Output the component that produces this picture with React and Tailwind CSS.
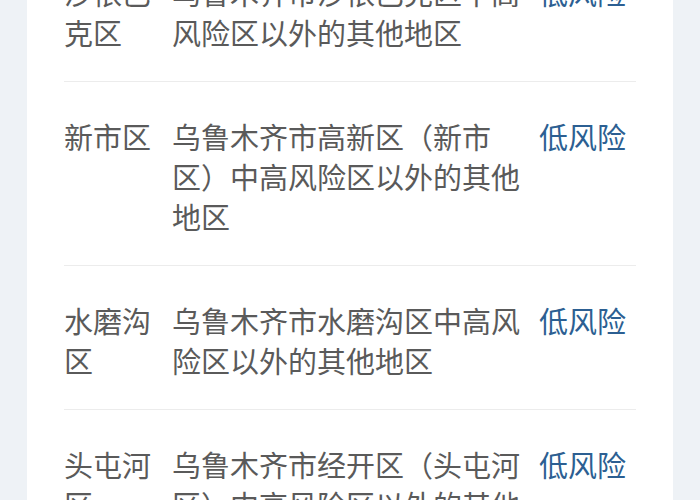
const rows = [
  { area: "沙依巴克区", scope: "乌鲁木齐市沙依巴克区中高风险区以外的其他地区", level: "低风险" },
  { area: "新市区", scope: "乌鲁木齐市高新区（新市区）中高风险区以外的其他地区", level: "低风险" },
  { area: "水磨沟区", scope: "乌鲁木齐市水磨沟区中高风险区以外的其他地区", level: "低风险" },
  { area: "头屯河区", scope: "乌鲁木齐市经开区（头屯河区）中高风险区以外的其他地区", level: "低风险" },
];

const App = () => {
  return (
    <div className="w-[700px] h-[500px] overflow-hidden bg-[#eef2f6]">
      <div
        className="mx-[27px] h-full overflow-hidden bg-white px-[37px]"
        style={{ fontFamily: '"Noto Sans CJK SC", "Noto Sans", sans-serif' }}
      >
        <div className="-mt-[62px]">
          {rows.map((row) => (
            <div
              key={row.area}
              className="grid grid-cols-[108px_367px_1fr] border-b border-[#ececec] pt-[34px] pb-[29px] text-[29px] leading-[40px] text-[#5a5a5a]"
            >
              <div className="pr-[12px]">{row.area}</div>
              <div className="pr-[12px]">{row.scope}</div>
              <div className="text-[#2c5f92] whitespace-nowrap">{row.level}</div>
            </div>
          ))}
        </div>
      </div>
    </div>
  );
};

export default App;
